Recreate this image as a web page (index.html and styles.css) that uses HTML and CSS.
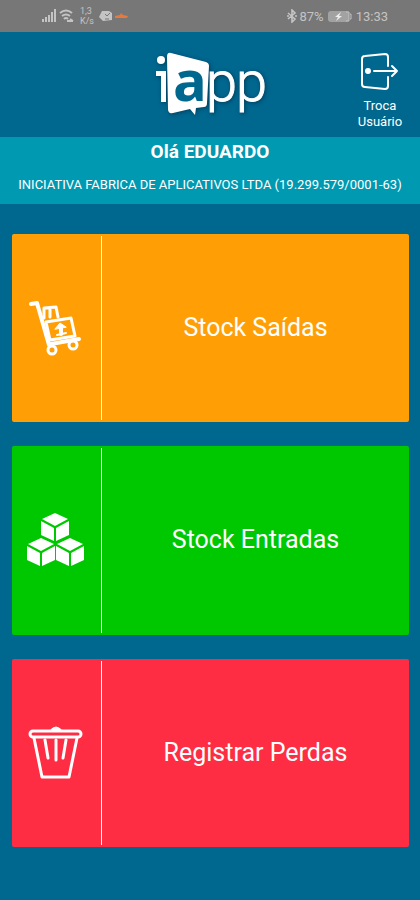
FILE: index.html
```html
<!DOCTYPE html>
<html lang="pt-BR">
<head>
<meta charset="utf-8">
<meta name="viewport" content="width=device-width, initial-scale=1">
<title>iapp Stock</title>
<link rel="stylesheet" href="styles.css">
</head>
<body>
<div class="status">
  <div class="status-group">
    <svg width="14" height="14" viewBox="0 0 14 14" fill="currentColor" aria-hidden="true"><path d="M0 10h2v3H0zM3 8h2v5H3zM6 6h2v7H6zM9 3h2v10H9zM12 0h2v13h-2z"/></svg>
    <svg width="16" height="14" viewBox="0 0 16 14" fill="none" stroke="currentColor" stroke-width="2" aria-hidden="true"><path d="M1 4q6-5 12 0M3 7q4-3 8 0M5 10q2-2 4 0"/><path d="M8 12h6M11 10l3 2"/></svg>
    <span class="rate">1,3<br>K/s</span>
    <svg class="alerts" width="29" height="12" viewBox="0 0 29 12" aria-hidden="true"><path d="M3 1h7l3 2v7l-9 1-4-4z" fill="currentColor"/><path d="M6 4l2 2 3-3M6 9h4" fill="none" stroke="#777" stroke-width="1"/><path class="orange" d="M16 6l5-1 1-2 2 2 5 1-1 2-6 0-6 0z"/></svg>
  </div>
  <div class="status-group status-right">
    <svg width="10" height="14" viewBox="0 0 10 14" fill="none" stroke="currentColor" stroke-width="1.6" aria-hidden="true"><path d="M1 4l7 6-3 3V1l3 3-7 6M0 7h2M8 7h2"/></svg>
    <span>87%</span>
    <svg class="battery" width="24" height="11" viewBox="0 0 24 11" aria-hidden="true"><rect width="21" height="11" rx="3" fill="#a2a2a2"/><path d="M22 3h1v5h-1M18 1h3v9h-3" fill="none" stroke="currentColor"/><path d="M13 1L7 6h3L8 10l6-5h-3z" fill="#eee"/></svg>
    <span class="clock">13:33</span>
  </div>
</div>
<header class="header">
  <svg class="logo" width="130" height="85" viewBox="0 0 130 85" role="img" aria-label="iapp">
    <circle cx="16" cy="20" r="4" fill="#fff"/>
    <path d="M11 31h10v31h-5V36h-5z" fill="#fff"/>
    <path d="M26 13Q22 12 22 17l1 52q0 5 5 4l17-4 5 6 1-7 8-1q3 0 3-4l2-37q0-3-3-4z" fill="#fff"/>
    <text class="logo-a" x="28" y="61">a</text>
    <text class="logo-p" x="61" y="61">p</text>
    <text class="logo-p" x="91" y="61">p</text>
  </svg>
  <a class="switch" href="#trocar">
    <svg width="40" height="40" viewBox="0 0 40 40" fill="none" stroke="currentColor" stroke-width="2" stroke-linejoin="round" stroke-linecap="round" aria-hidden="true"><path d="M28 14V5q0-3-3-3L5 4Q2 4 2 7v25q0 3 3 3l20 2q3 0 3-3v-9"/><circle cx="8" cy="19" r="2" fill="currentColor"/><path d="M14 19h23M32 14l5 5-5 5"/></svg>
    <span>Troca<br>Usuário</span>
  </a>
</header>
<section class="band">
  <h1>Olá EDUARDO</h1>
  <p>INICIATIVA FABRICA DE APLICATIVOS LTDA (19.299.579/0001-63)</p>
</section>
<main class="menu">
  <button class="card out" type="button">
    <span class="icon">
      <svg width="60" height="60" viewBox="0 0 60 60" fill="none" stroke="currentColor" stroke-width="3" stroke-linejoin="round" stroke-linecap="round" aria-hidden="true"><path d="M6 6l6-1 12 42M26 46l28-5" stroke-width="4"/><path d="M21 24l25-4 4 18-25 4z"/><path d="M19 20V10l12-1 2 10M25 10v9"/><path d="M36 36v-6" stroke-width="4"/><path d="M30 31l5-6 6 4z" fill="currentColor" stroke-width="1"/><path d="M32 37l9-2" stroke-width="2"/><circle cx="27" cy="52" r="4"/><circle cx="48" cy="47" r="4"/></svg>
    </span>
    <span class="label">Stock Saídas</span>
  </button>
  <button class="card in" type="button">
    <span class="icon">
      <svg width="60" height="60" viewBox="0 0 60 60" fill="currentColor" aria-hidden="true"><g id="cube"><path d="M30 3l13 6-13 7-13-7z"/><path d="M16 11l13 7v13l-13-6zM44 11l-13 7v13l13-6z"/></g><use href="#cube" x="-14" y="25"/><use href="#cube" x="15" y="25"/></svg>
    </span>
    <span class="label">Stock Entradas</span>
  </button>
  <button class="card loss" type="button">
    <span class="icon">
      <svg width="60" height="60" viewBox="0 0 60 60" fill="none" stroke="currentColor" stroke-width="3" stroke-linejoin="round" stroke-linecap="round" aria-hidden="true"><rect x="5" y="8" width="51" height="6" rx="3"/><path d="M27 7q4-4 8 0z" fill="currentColor"/><path d="M9 15l8 39h27l8-39M20 17l3 18M31 17v20M41 17l-3 18"/></svg>
    </span>
    <span class="label">Registrar Perdas</span>
  </button>
</main>
</body>
</html>
```
FILE: styles.css
```css
* { box-sizing: border-box; }
body {
  margin: 0;
  min-height: 100vh;
  display: flex;
  flex-direction: column;
  background: #00678f;
  color: #fff;
  font-family: Roboto, "Liberation Sans", sans-serif;
}
.status {
  height: 32px;
  padding: 0 32px 0 42px;
  display: flex;
  align-items: center;
  justify-content: space-between;
  background: #777;
  color: #c4c4c4;
  font-size: 13px;
}
.status-group { display: flex; align-items: center; gap: 3px; }
.status-right { gap: 2px; }
.rate { margin-left: 2px; font-size: 9px; line-height: 10px; }
.alerts { margin-left: 2px; }
.orange { fill: #e8793e; }
.battery, .clock { margin-left: 2px; }
.header {
  height: 105px;
  display: grid;
  grid-template-columns: 1fr auto 1fr;
}
.logo {
  grid-column: 2;
  margin-top: 8px;
  filter: drop-shadow(1px 1px 2px #003e5c);
}
.logo-a { font: 700 56px "Open Sans", sans-serif; fill: #00678f; }
.logo-p { font: 300 56px Roboto, sans-serif; fill: #fff; stroke: #fff; stroke-width: 1px; }
.switch {
  justify-self: end;
  width: 80px;
  padding-top: 20px;
  display: flex;
  flex-direction: column;
  align-items: center;
  gap: 6px;
  color: inherit;
  text-align: center;
  text-decoration: none;
  font-size: 13px;
  line-height: 16px;
}
.band {
  min-height: 67px;
  padding: 4px;
  background: #0099b2;
  text-align: center;
}
.band h1 { margin: 0; font-size: 19px; line-height: 22px; font-weight: 700; }
.band p { margin: 12px 0 0; font-size: 13px; line-height: 20px; }
.menu {
  flex: 1;
  display: flex;
  flex-direction: column;
  gap: 24px;
  padding: 30px 11px 53px 12px;
}
.card {
  flex: 1;
  display: flex;
  min-height: 100px;
  padding: 2px 0;
  border: 0;
  border-radius: 2px;
  color: #fff;
  font-family: inherit;
  cursor: pointer;
}
.out { background: #ff9f05; }
.in { background: #00c800; }
.loss { background: #ff2d44; }
.icon {
  width: 90px;
  padding-right: 3px;
  align-self: stretch;
  display: flex;
  align-items: center;
  justify-content: center;
  border-right: 1px solid #fff;
}
.label { flex: 1; align-self: center; font-size: 25px; line-height: 32px; }
```
